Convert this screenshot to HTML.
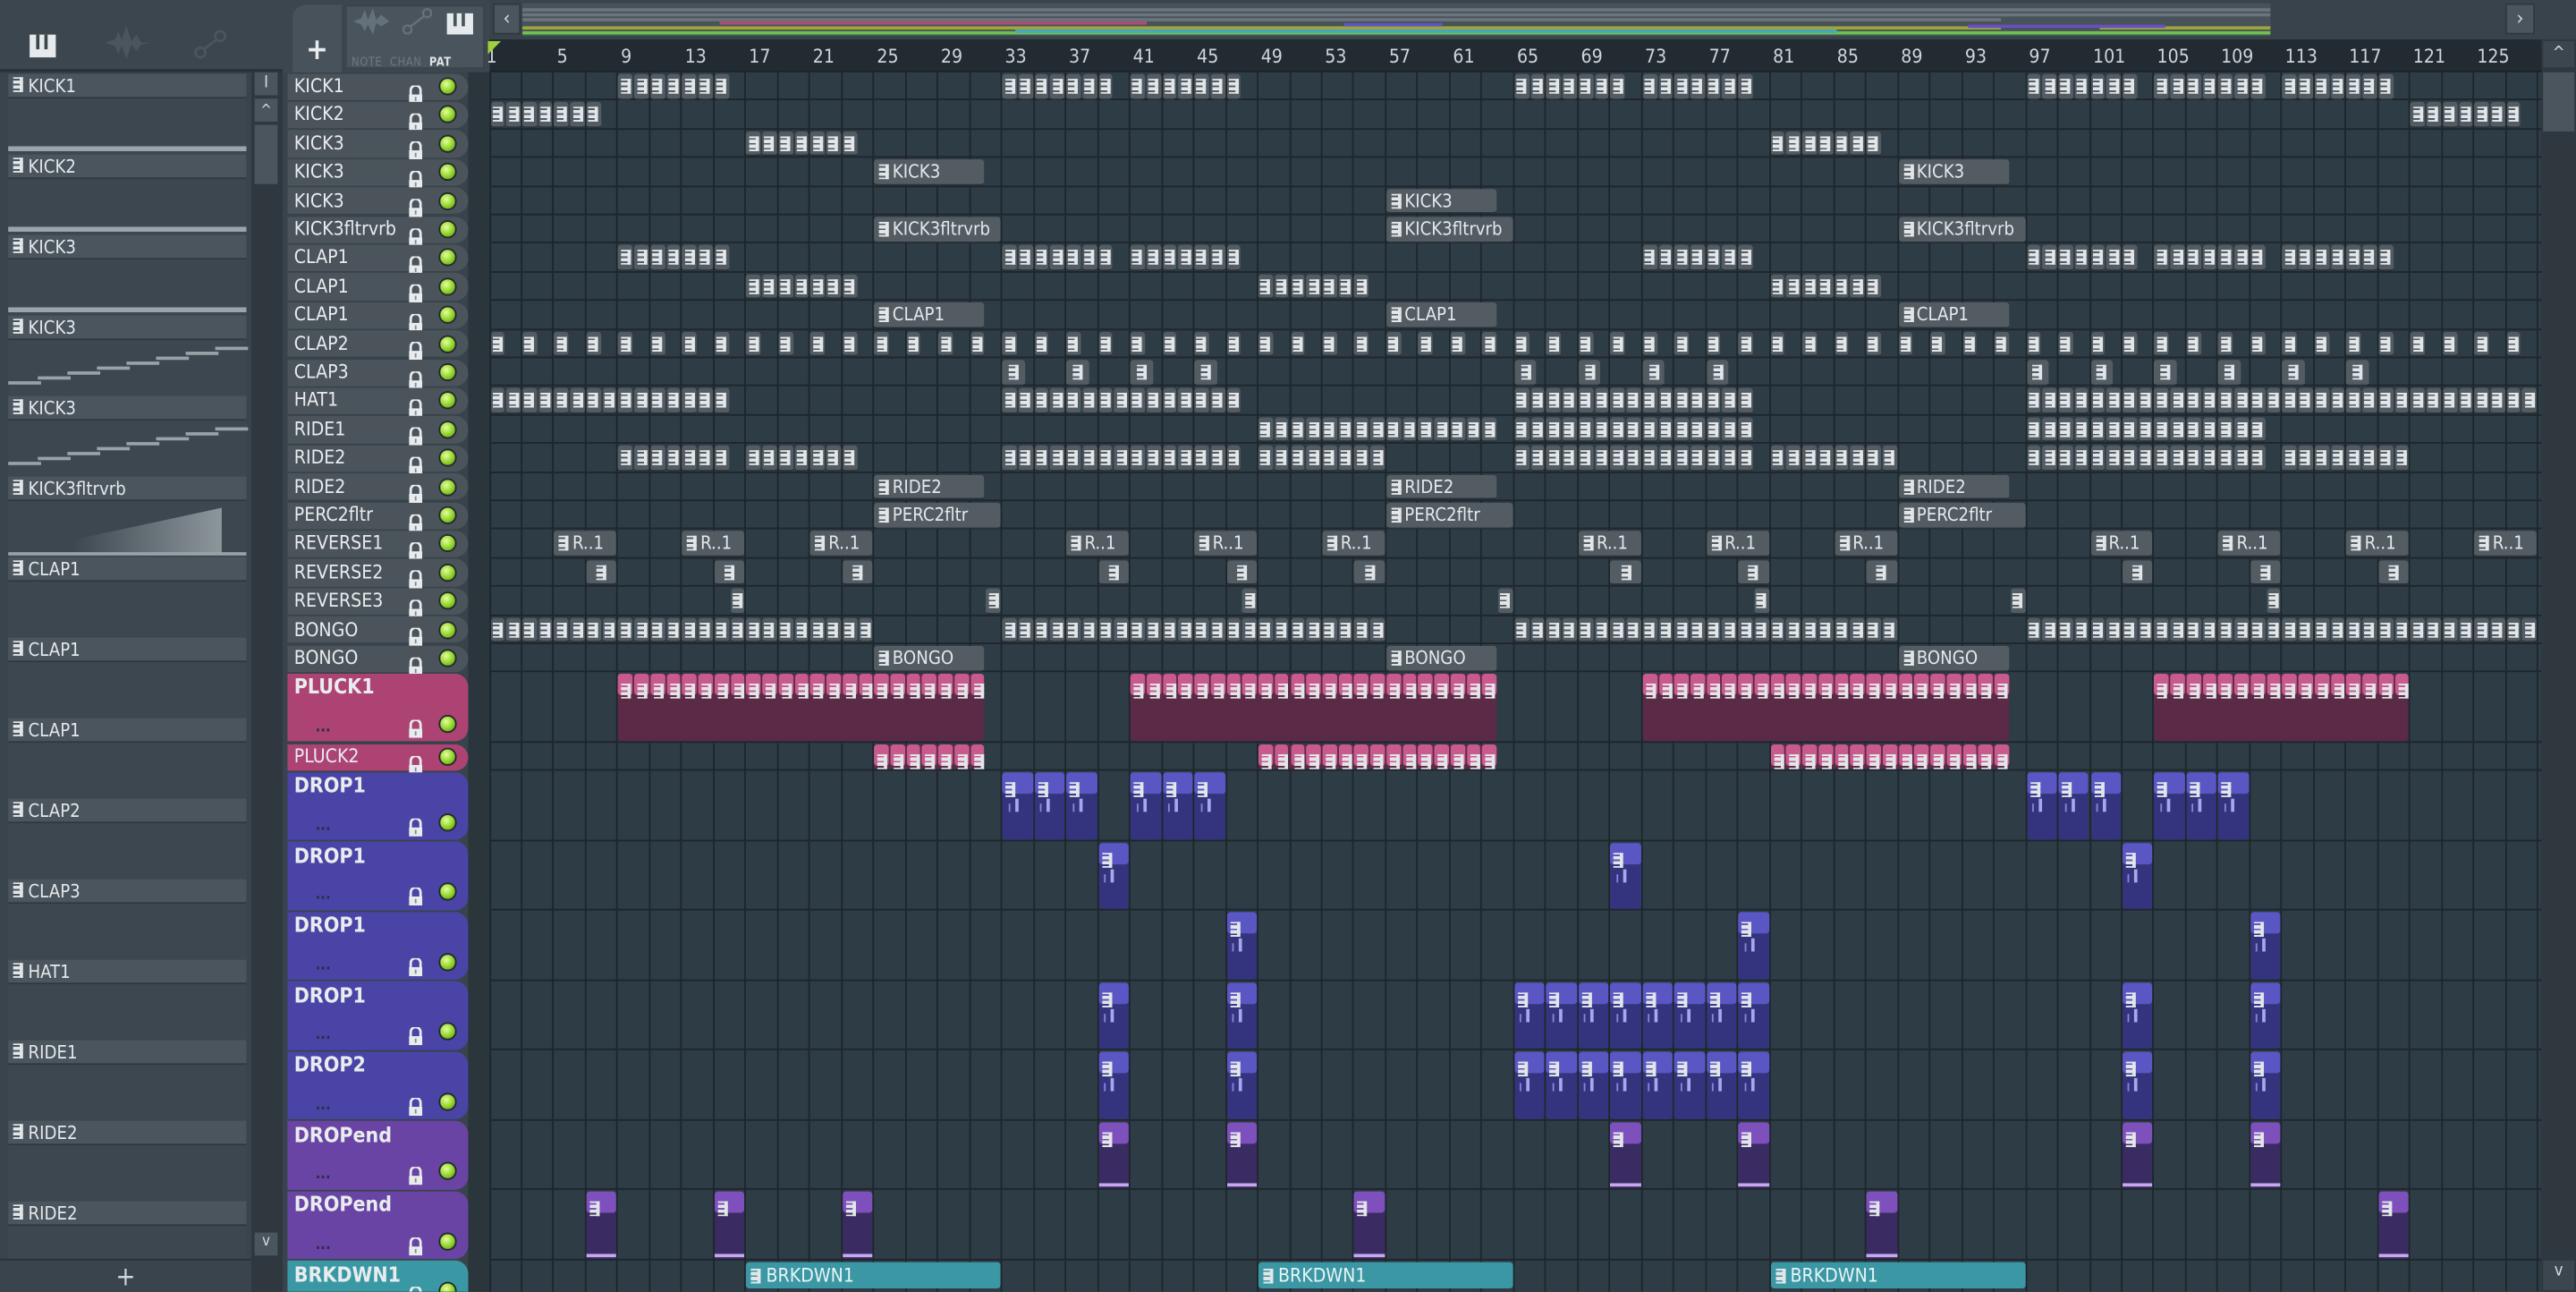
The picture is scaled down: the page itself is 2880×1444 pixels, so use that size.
<!DOCTYPE html>
<html><head><meta charset="utf-8"><style>
html,body{margin:0;padding:0;width:2880px;height:1444px;overflow:hidden;background:#39434b}
#r{position:absolute;left:0;top:0;width:1568px;height:786px;transform:scale(1.836735);transform-origin:0 0;background:#39434b;font-family:"DejaVu Sans Condensed","Liberation Sans Narrow","Liberation Sans",sans-serif;color:#d8dde0;overflow:hidden}
.a{position:absolute;box-sizing:border-box}
.ic{display:inline-block;width:6px;height:9px;background:linear-gradient(#e2e6e8 0 1px,transparent 1px 2px,#e2e6e8 2px 4px,transparent 4px 5px,#e2e6e8 5px 7px,transparent 7px 8px,#e2e6e8 8px);position:relative}
.ic:after{content:"";position:absolute;right:0;top:0;width:2px;height:9px;background:#e2e6e8}
</style></head><body><div id="r"></div>
<script>
const R=document.getElementById('r');
function d(x,y,w,h,st,tx){const e=document.createElement('div');e.className='a';e.style.cssText=`left:${x}px;top:${y}px;width:${w}px;height:${h}px;`+(st||'');if(tx!==undefined)e.innerHTML=tx;R.appendChild(e);return e;}
const BW=9.74,GX=298;const X=b=>GX+(b-1)*BW;
const IC='<span class="ic"></span>';
// left panel
d(0,0,172,44,'background:#3c464e;border-bottom:2px solid #2a3238');
d(18,20,16,14,'','<svg width="16" height="14"><rect x="0" y="0" width="16" height="14" fill="#e6eaec"/><rect x="4" y="0" width="2" height="9" fill="#3c464e"/><rect x="9" y="0" width="2" height="9" fill="#3c464e"/></svg>');
d(64,16,28,20,'','<svg width="28" height="20"><path d="M0 10 L6 8 L8 3 L10 8 L13 0 L16 9 L19 5 L22 10 L28 10 L22 11 L19 15 L16 11 L13 20 L10 12 L8 17 L6 12 Z" fill="#4a555e"/></svg>');
d(118,18,20,18,'','<svg width="20" height="18"><circle cx="4" cy="14" r="3" fill="none" stroke="#4a555e" stroke-width="1.5"/><circle cx="16" cy="4" r="3" fill="none" stroke="#4a555e" stroke-width="1.5"/><line x1="6" y1="12" x2="14" y2="6" stroke="#4a555e" stroke-width="1.5"/></svg>');
d(0,44,153,722,'background:#3a444c');
const LP=['KICK1','KICK2','KICK3','KICK3','KICK3','KICK3fltrvrb','CLAP1','CLAP1','CLAP1','CLAP2','CLAP3','HAT1','RIDE1','RIDE2','RIDE2'];
LP.forEach((n,i)=>{const y=45+i*49;d(5,y,145,15,'background:#4b555d;border-bottom:1px solid #2f383e;font-size:11px;line-height:15px;padding-left:3px;color:#e4e8ea;white-space:nowrap',IC+' '+n);
d(5,y+15,145,34,'background:#3d474f');
if(i<3)d(5,y+44,145,3,'background:#9aa4a9');});
[3,4].forEach(i=>{const y=45+i*49;for(let k=0;k<8;k++)d(5+k*18,y+40-k*3,20,2,'background:#98a2a7');});
d(5,45+6*49-30,130,28,'background:linear-gradient(90deg,#3d474f 0%,#3d474f 30%,#8c969b 100%);clip-path:polygon(0 100%,100% 0,100% 100%)');
d(5,45+6*49-3,145,2,'background:#98a2a7');
d(0,766,153,20,'background:#3a444c;border-top:1px solid #2a3238;font-size:16px;text-align:center;line-height:20px;color:#cfd5d8','+');
d(153,44,19,742,'background:#2f383e');
d(155,44,14,14,'background:#4b555d;font-size:10px;text-align:center;line-height:14px','I');
d(155,60,14,14,'background:#4b555d;font-size:9px;text-align:center;line-height:16px','^');
d(155,76,14,36,'background:#4b555d');
d(155,750,14,14,'background:#4b555d;font-size:9px;text-align:center;line-height:12px','v');
d(172,0,130,44,'background:#3c464e');
d(178,3,30,41,'background:#48525a;border-radius:8px 0 0 0;font-size:18px;text-align:center;line-height:56px;color:#e8ecee;font-weight:bold','+');
d(210,3,85,39,'background:#4a545c;border:1px solid #3a434a');
d(214,34,80,8,'font-size:7px;color:#6d787f;letter-spacing:.3px','NOTE &nbsp;CHAN &nbsp;<b style="color:#dde2e5">PAT</b>');
d(215,5,22,16,'','<svg width="22" height="16"><path d="M0 8 L5 6 L7 1 L9 7 L12 0 L14 7 L17 4 L22 8 L17 11 L14 9 L12 16 L9 10 L7 14 L5 10 Z" fill="#65717a"/></svg>');
d(245,5,18,16,'','<svg width="18" height="16"><circle cx="3" cy="13" r="2.5" fill="none" stroke="#65717a" stroke-width="1.3"/><circle cx="15" cy="3" r="2.5" fill="none" stroke="#65717a" stroke-width="1.3"/><line x1="5" y1="11" x2="13" y2="5" stroke="#65717a" stroke-width="1.3"/></svg>');
d(272,6,16,13,'','<svg width="16" height="13"><rect width="16" height="13" fill="#e6eaec"/><rect x="4" width="2" height="8" fill="#4a545c"/><rect x="9" width="2" height="8" fill="#4a545c"/></svg>');
d(298,0,1270,24,'background:#39434b');
d(300,2,17,19,'background:#4b555d;border:1px solid #2f383e;font-size:12px;text-align:center;line-height:17px','‹');
d(1525,2,18,19,'background:#4b555d;border:1px solid #2f383e;font-size:12px;text-align:center;line-height:17px','›');
d(318,2,1064,20,'background:#48525a');
[[3,'#6a747a',0,1064],[6,'#6a747a',0,1064],[9,'#6a747a',0,900],[11,'#a94d7b',120,380],[14,'#9ea53a',0,900],[14,'#9ea53a',960,1064],[17,'#6bc34c',0,1064],[12,'#5c55c5',500,560],[16,'#45a8be',300,800],[13,'#6a4fc0',880,1000]].forEach(([y,c,a,b])=>d(318+a,2+y,b-a,1.5,'background:'+c));
d(298,24,1249,20,'background:#222b31;border-bottom:1px solid #1a2126');
for(let b=1;b<=125;b+=4)d(X(b)+(b==1?-2:2),25,30,18,'font-size:11.5px;line-height:18px;color:#cfd5d9',b);
d(297,25,8,8,'background:#9fd23a;clip-path:polygon(0 0,100% 0,0 100%)');
d(1547,24,21,762,'background:#2f383e');
d(1548,25,19,16,'background:#3c464e;font-size:10px;text-align:center;line-height:16px','^');
d(1548,44,19,36,'background:#4b555d');
d(1548,767,19,18,'background:#3c464e;font-size:10px;text-align:center;line-height:14px','v');
d(285,44,262,742,'background:#2b353c');
d(298,44,1249,742,'background:#2e3c46');
for(let b=1;b<=129;b+=2)d(X(b)-0.5,44,1,742,'background:#1d262c');
const rows=[];const names=['KICK1','KICK2','KICK3','KICK3','KICK3','KICK3fltrvrb','CLAP1','CLAP1','CLAP1','CLAP2','CLAP3','HAT1','RIDE1','RIDE2','RIDE2','PERC2fltr','REVERSE1','REVERSE2','REVERSE3','BONGO','BONGO'];
names.forEach((n,i)=>rows.push({n,y:44+i*17.4,h:17.4,c:'#4b545b',big:0}));
let y=44+21*17.4;
rows.push({n:'PLUCK1',y,h:42.6,c:'#ad4373',big:1});y+=42.6;
rows.push({n:'PLUCK2',y,h:17.4,c:'#ad4373',big:0});y+=17.4;
['DROP1','DROP1','DROP1','DROP1','DROP2'].forEach(n=>{rows.push({n,y,h:42.5,c:'#4944a6',big:1});y+=42.5;});
['DROPend','DROPend'].forEach(n=>{rows.push({n,y,h:42.5,c:'#6944a4',big:1});y+=42.5;});
rows.push({n:'BRKDWN1',y,h:30,c:'#3a98a4',big:1});
function lock(x,y){d(x,y,10,11,'','<svg width="10" height="11"><path d="M2 6 V3 A3 3 0 0 1 8 3 V6" fill="none" stroke="#e8ecee" stroke-width="1.5"/><rect x="1" y="5.5" width="8" height="5.5" fill="#e8ecee"/><rect x="4.5" y="7" width="1" height="2.5" fill="#888"/></svg>');}
function led(x,y){d(x,y,11,11,'border-radius:50%;background:radial-gradient(circle at 40% 35%,#e4ff9a,#8fd22a 55%,#5a8a18);border:1.5px solid #23292d');}
rows.forEach((r,i)=>{
 d(298,r.y+r.h-1,1249,1,'background:#1d262c');
 d(175,r.y+0.5,110,r.h-1,`background:${r.c};border-radius:0 8px 8px 0;`);
 d(179,r.y+(r.big?2:1),100,14,`font-size:${r.big?12.5:11.5}px;line-height:14px;color:#e8ecee;white-space:nowrap;${r.big?'font-weight:bold;':''}`,r.n);
 if(r.big){lock(248,r.y+r.h-18);led(267,r.y+r.h-17);d(192,r.y+r.h-14,15,8,'font-size:9px;color:#2a2d4a;font-weight:bold','...');}
 else{lock(248,r.y+3.5);led(267,r.y+3);}
});
function gbox(ri,b,len,col,lbl){const r=rows[ri];const x=X(b),w=len*BW;col=col||'#535c63';
 const e=d(x+0.5,r.y+1,w-1,15.5,`background:${col};border-radius:2px;border-bottom:1.5px solid #2a3237;overflow:hidden;white-space:nowrap;`);
 if(lbl){e.innerHTML=`<span class="ic" style="margin:3px 2px 0 3px;vertical-align:top"></span><span style="font-size:11px;line-height:15px;vertical-align:top;color:#e4e8ea">${lbl}</span>`;}
 else e.innerHTML='<span class="ic" style="display:block;margin:3px auto 0"></span>';
 return e;}
function rep(ri,start,n,step,len,col){for(let k=0;k<n;k++)gbox(ri,start+k*(step||1),len||1,col);}
const G7=(ri,arr)=>arr.forEach(s=>rep(ri,s,7));
G7(0,[9,33,41,65,73,97,105,113]);
G7(1,[1,121]);G7(2,[17,81]);
[25,89].forEach(s=>gbox(3,s,7,0,'KICK3'));gbox(4,57,7,0,'KICK3');
[25,57,89].forEach(s=>gbox(5,s,8,0,'KICK3fltrvrb'));
G7(6,[9,33,41,73,97,105,113]);G7(7,[17,49,81]);
[25,57,89].forEach(s=>gbox(8,s,7,0,'CLAP1'));
rep(9,1,64,2);
[33,37,41,45,65,69,73,77,97,101,105,109,113,117].forEach(s=>gbox(10,s,1.5));
rep(11,1,15);rep(11,33,15);rep(11,65,15);rep(11,97,32);
rep(12,49,15);rep(12,65,15);rep(12,97,15);
G7(13,[9,17]);rep(13,33,15);rep(13,49,8);rep(13,65,15);rep(13,81,8);rep(13,97,15);rep(13,113,8);
[25,57,89].forEach(s=>gbox(14,s,7,0,'RIDE2'));
[25,57,89].forEach(s=>gbox(15,s,8,0,'PERC2fltr'));
[5,13,21,37,45,53,69,77,85,101,109,117,125].forEach(s=>gbox(16,s,4,0,'R..1'));
[7,15,23,39,47,55,71,79,87,103,111,119].forEach(s=>gbox(17,s,2));
[16,32,48,64,80,96,112].forEach(s=>gbox(18,s,1));
rep(19,1,24);rep(19,33,24);rep(19,65,24);rep(19,97,32);
[25,57,89].forEach(s=>gbox(20,s,7,0,'BONGO'));
function big(ri,b,len,hc,bc,per,line){const r=rows[ri];const x=X(b),w=len*BW;
 d(x+0.5,r.y+1,w-1,r.h-2,`background:${bc};border-radius:2px;`);
 for(let k=0;k<len;k+=per){const e=d(x+k*BW+0.5,r.y+1,per*BW-1,13,`background:${hc};border-radius:2px;`);
  e.innerHTML='<span class="ic" style="margin:2px 0 0 2px"></span>';}
 if(line)d(x+0.5,r.y+r.h-4,w-1,2,'background:'+line);}
[[9,23],[41,23],[73,23],[105,16]].forEach(([s,l])=>big(21,s,l,'#c85a8e','#5a2a46',1));
[[25,7],[49,15],[81,15]].forEach(([s,l])=>big(22,s,l,'#c85a8e','#5a2a46',1));
function drop(ri,arr){arr.forEach(s=>{big(ri,s,2,'#5a56c4','#34347e',2);const r=rows[ri];d(X(s)+8,r.y+17,2,8,'background:#a9a6ee');d(X(s)+4,r.y+20,1,5,'background:#8884d8');});}
drop(23,[33,35,37,41,43,45,97,99,101,105,107,109]);
drop(24,[39,71,103]);drop(25,[47,79,111]);
const D=[39,47,65,67,69,71,73,75,77,79,103,111];drop(26,D);drop(27,D);
[39,47,71,79,103,111].forEach(s=>big(28,s,2,'#7d50bc','#3a2b62',2,'#c7a8f0'));
[7,15,23,55,87,119].forEach(s=>big(29,s,2,'#7d50bc','#3a2b62',2,'#c7a8f0'));
[17,49,81].forEach(s=>{const r=rows[30];const e=d(X(s)+0.5,r.y+1,16*BW-1,16,'background:#3a97a3;border-radius:2px;font-size:11.5px;line-height:16px;color:#e8f4f6;white-space:nowrap');e.innerHTML='<span class="ic" style="margin:0 3px 0 3px;vertical-align:-1px"></span>BRKDWN1';});
</script></body></html>
